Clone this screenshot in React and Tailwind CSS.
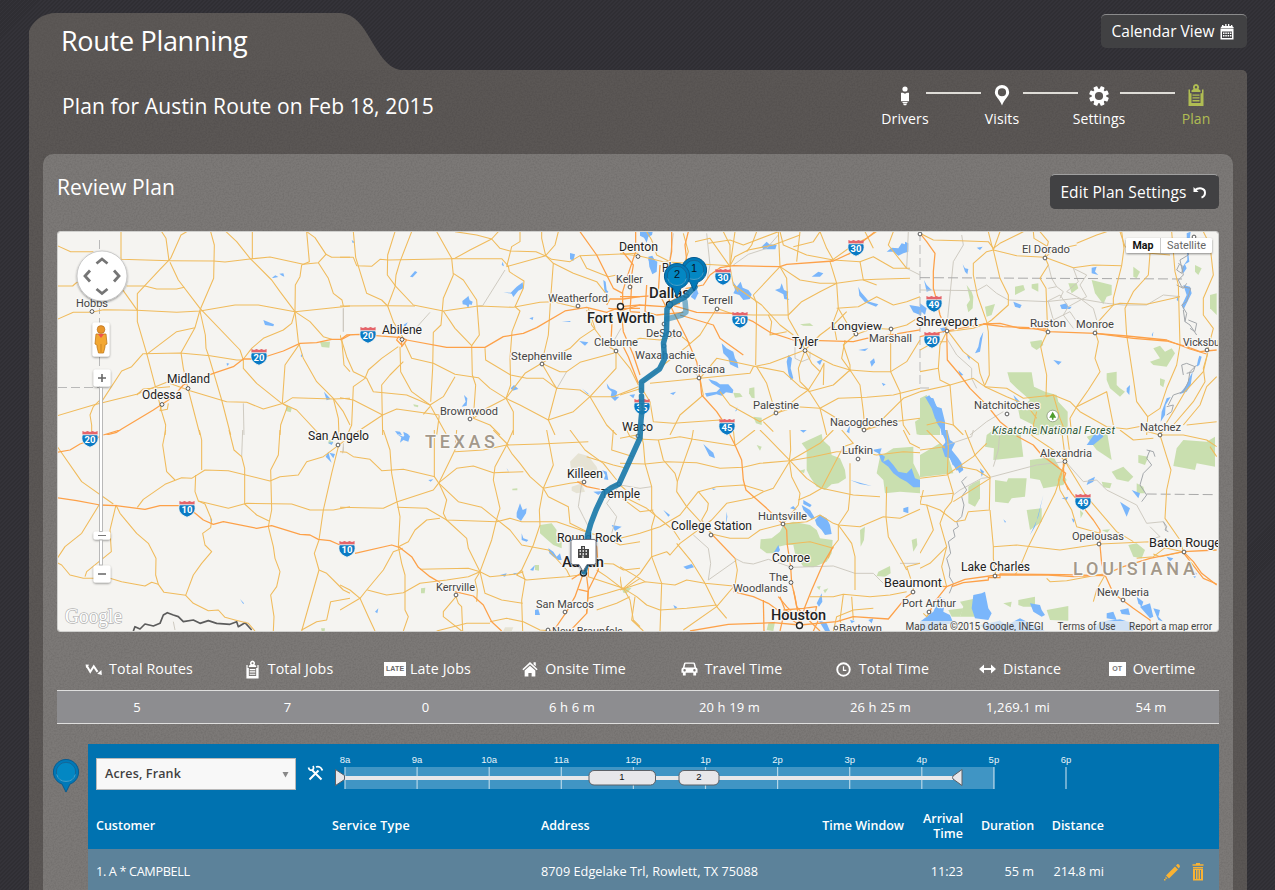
import React from "react";

/* ---------- map data: each tile is drawn at one third of its own units ---------- */
const tiles = [
  {
    x: 50, y: 225,
    roads: [
      "22,62 62,80 130,80", "22,183 68,183 78,174 100,165", "22,283 70,262 125,262 160,254 260,256 380,262 450,258 555,240 625,240 735,260 850,248 900,243",
      "213,20 213,103 360,107 490,108 525,111 600,102 660,96 760,118 805,113 828,88 845,97 900,97",
      "335,20 348,40 357,107", "410,20 393,30 362,100 330,133 262,206 262,290 290,385 320,500 335,560 347,600 345,630",
      "360,112 385,165 450,250 570,375 580,405 580,430 620,475 695,535 740,555 810,630",
      "482,20 493,60 491,160 450,255 435,308 393,383 400,430 415,495 450,630",
      "528,20 560,50 600,100 665,165 690,200 735,260 745,350 760,400 800,470 850,520 865,580 867,630",
      "607,20 607,102", "770,20 778,110 755,120 750,155 736,180 735,260 725,295 700,315 640,340 605,370 578,405",
      "770,20 795,38 828,88", "805,113 835,160 850,205 876,225 880,243", "230,183 285,183 320,192 380,192 403,187", "215,190 262,256",
      "450,258 466,330 468,370 475,390 490,440 515,525 542,630", "280,386 390,384 480,392 560,405 580,405", "290,388 380,320 435,308",
      "155,530 215,438 245,425 280,385", "22,572 130,540 260,508 350,472 400,490 420,497 530,530 590,532 640,552 700,535 728,518 850,522 900,520",
      "155,520 130,545 120,570 125,600 125,620", "735,260 780,290 820,335 845,343", "750,355 705,420 697,535 712,545 692,600 690,630",
      "875,343 882,420 900,440", "260,510 280,492 360,485", "335,540 330,557 352,553 355,535", "850,520 880,560 900,600",
    ],
    major: ["150,635 200,622 215,612 310,555 370,515 400,480 490,445 550,425 580,402 625,402 700,378 750,355 800,353 845,343 875,343 900,330"],
    minor: ["880,250 880,320", "580,535 582,630"],
    water: ["640,285 672,298 670,304 645,300", "822,500 842,522 830,526", "666,158 676,151 685,156 670,159", "688,146 700,145 703,155 696,152", "530,414 538,416 531,423", "752,393 758,385 755,397"],
    park: ["810,350 840,350 838,368 815,366", "710,540 725,550 722,562 708,558"],
  },
  {
    x: 340, y: 225,
    roads: [
      "0,97 40,97 50,122 95,124 120,103 145,105 335,101 485,101 505,123 508,140 520,148 552,168 550,190 525,245 540,258 516,320 510,400 512,480 498,520",
      "40,20 47,97 80,205 125,225 143,243 160,290 190,340", "165,20 143,90 142,150 168,185 220,240 310,258 415,243 520,247 600,232 640,230 720,250",
      "215,20 180,110 168,150 165,185 143,243", "0,243 143,242 225,243", "290,20 335,100 340,150 310,220 303,300 280,322 278,430 272,530",
      "345,20 410,30 455,42 480,70 510,78 588,80 615,92", "475,20 455,42 390,75 345,100 335,101", "540,20 540,50 515,65 500,125",
      "605,20 605,40 617,92 590,100 500,125", "655,20 645,60 617,92", "617,92 640,115 700,145 770,170 805,215", "617,92 635,103 690,110 720,92 895,85",
      "640,115 632,220 625,330 605,415", "310,258 345,310 395,362 397,450 407,480 400,580", "340,145 370,165 410,225 418,330 395,362",
      "0,330 20,395 40,440 80,460 100,500 200,510 270,540", "175,365 125,400 85,435 75,460 40,485 35,600 22,630", "180,365 182,440 215,500 270,540 320,630",
      "192,350 215,400 280,415 345,448 415,458 450,490 498,520 520,560 520,630", "270,540 310,515 345,455", "0,518 40,525 128,570 170,552 298,570 290,630",
      "190,410 150,450 125,480 128,630", "128,570 60,615 40,630", "250,568 270,545", "435,370 437,405 512,450 560,460 610,460 650,490 720,495 750,515",
      "498,520 555,445 605,415 660,440 680,440 720,412 820,385 828,378", "605,415 640,475 650,490 625,585 645,630", "498,520 540,540 625,585 700,560 750,515 820,515 895,485",
      "828,378 828,430 750,515 800,600 830,630", "828,378 870,430 895,480", "400,580 440,550 498,520", "400,580 450,600 480,630", "720,92 740,130 805,155 830,150",
      "745,250 765,310 720,340 690,370 630,400 605,415", "740,255 755,300 800,360 828,378",
    ],
    major: ["0,345 20,330 60,328 185,338 200,345 320,367 435,367 490,335 550,325 590,308 675,258 740,247 800,262 830,250 900,250", "887,20 887,80 860,160 848,200 848,240", "720,20 770,90 820,190 848,205", "817,270 812,370", "845,270 850,320 880,390 900,450", "800,240 810,222 850,222 900,215", "805,250 850,255 900,240", "185,340 185,365 200,345 175,335 170,345 185,360"],
    minor: ["495,135 428,242 415,243", "10,250 10,320", "270,262 220,318", "680,440 650,492", "843,310 820,350"],
    water: ["367,228 382,216 385,212 389,226 398,230 395,240 388,238 385,250 379,240 368,238", "490,202 512,203 530,185 548,172 550,190 535,197 520,216 515,206", "210,155 225,138 232,142 218,157", "690,84 705,88 700,108 690,102", "488,110 492,124 485,120", "568,280 580,276 578,285", "790,165 797,170 800,195 805,200 800,210 793,195", "800,475 810,490 825,495 832,500 828,515 838,515 825,528 812,515 815,500 803,490", "372,510 382,520 380,542 365,545 377,530", "512,490 522,480 535,492 518,497", "725,490 750,510 740,505", "718,348 745,352 735,362", "35,45 45,52 38,54", "190,300 203,292 196,306", "665,288 692,288 690,291", "165,618 180,620 186,630 172,628", "190,620 205,628 206,632 192,630"],
    park: ["220,538 235,541 234,547 222,544"],
  },
  {
    x: 620, y: 225,
    roads: [
      "0,86 55,92 130,110 330,122", "80,20 95,45 110,90 150,110", "345,20 330,125 340,180 355,200", "410,20 395,60 380,80", "475,20 480,125", "540,20 530,110",
      "330,122 345,95 385,75 460,60 540,30", "225,50 270,40 330,125", "265,55 330,45 370,60 475,20", "480,125 500,160 505,280 545,350 555,375",
      "480,125 540,165 600,175 650,175 720,165 770,163 870,160", "480,125 400,210 410,235 407,420", "290,250 340,268 400,270 505,270",
      "290,250 240,330 200,365 130,420 65,475", "340,180 425,240 480,300 520,330", "505,270 545,230 600,200 650,175", "630,110 650,175 655,250 690,310 705,330",
      "630,110 700,60 740,40 770,20", "640,105 720,110 760,95 820,130 870,130", "720,110 730,165 770,180", "600,20 620,70 640,105", "650,250 715,245 770,215 820,240 860,230 900,215",
      "705,330 670,360 690,420 690,440", "710,328 760,310 812,313 860,300 900,275", "812,313 812,440", "690,435 760,440 812,440 860,410 900,345",
      "555,375 600,330 640,300 680,260", "555,375 575,415 600,440 565,495 600,550 620,630", "555,375 535,430 540,470 565,495", "555,375 610,405 640,420 690,435 640,480 565,500",
      "555,375 450,415 400,425 390,445 240,460 90,475", "410,425 440,475 467,565", "410,425 490,440 540,485 565,495 530,520 480,560 467,565", "240,460 290,400 410,425",
      "467,565 420,590 330,540 300,500", "467,565 530,545 600,550 650,580 735,615", "600,550 655,520 740,517 820,510 900,490", "690,435 720,480 730,560 735,615",
      "812,440 840,500 850,600 870,630", "735,615 780,590 850,520 900,500", "735,615 820,590 900,580", "240,460 250,510 180,570 150,630", "65,490 90,530 100,590 160,595 300,585 330,630",
      "0,510 65,490", "190,25 205,80 195,110", "735,20 760,70", "820,20 805,60 860,130", "655,250 640,290 650,345", "445,270 455,290 450,330 500,320", "0,360 60,340 120,345 180,330 210,355",
      "690,435 665,400 675,345", "600,20 580,50 520,65", "430,590 460,620", "310,20 330,60 330,120", "600,440 612,415 610,480", "480,20 490,60 560,90 640,105",
    ],
    major: ["148,235 200,190 250,180 270,150 300,128 340,122 480,125 500,118 640,108 690,85 715,60 765,20", "148,238 230,262 340,265 400,290 450,322 520,345 600,347 700,350 740,340 780,335 900,315", "150,240 180,300 200,340 230,410 240,460 245,510 290,560 310,590", "155,20 155,80 145,130 148,230", "0,245 60,240 130,245 180,235", "0,215 60,215 130,210", "80,180 75,260 110,270 190,262", "205,20 195,60 205,150", "180,270 280,300 300,340 370,390", "0,345 25,395 55,475", "35,180 30,260 60,262", "0,70 40,120 30,180", "120,120 115,200 140,250"],
    minor: ["475,30 440,70 385,88 340,120", "260,25 270,120 262,160", "160,25 150,100", "525,360 525,400 545,410 570,400 570,380", "865,20 860,130 900,150", "205,425 240,460"],
    water: ["60,20 98,20 96,30 85,35 80,53 72,38 60,32", "85,95 97,92 104,105 112,110 110,140 97,148 88,125", "95,95 90,110 84,104", "425,65 440,50 448,58 470,60 466,73 430,73", "338,168 350,185 362,170 368,188 385,195 395,208 390,222 370,225 358,210 340,205 345,195", "465,195 480,190 485,175 492,195 505,200 500,215 508,225 493,222 490,208", "575,155 595,140 610,145 600,155", "784,72 800,80 815,68 835,70 845,55 855,58 855,50 865,55 865,80 850,85 835,92 820,80 800,80", "715,185 722,200 735,215 748,230 775,238 768,245 735,232 718,212", "305,355 320,370 340,380 345,400 352,410 355,430 345,425 330,418 325,400 310,385", "505,390 516,400 512,430 520,460 512,465 505,445 500,410", "265,462 290,470 300,478 325,478 340,495 338,505 318,502 305,512 290,508 260,515 255,505 290,500 300,490 275,475", "750,410 762,400 765,412 755,425", "868,240 900,245 900,270 880,262", "28,510 45,508 40,520", "150,505 168,500 160,510", "715,375 745,370 735,378", "345,560 352,545 350,556", "785,473 797,478 790,483", "212,215 230,190 235,205 225,225", "590,410 608,402 600,420", "680,620 690,600 688,625"],
    park: ["388,490 403,487 404,520 395,518 387,505", "340,503 360,505 368,515 345,518", "400,575 425,578 425,600 408,595", "540,298 570,295 580,303 550,302", "885,590 900,580 900,630 890,628"],
  },
  {
    x: 920, y: 225,
    roads: [
      "0,25 40,45 120,47 205,50 220,70 240,55 310,20", "205,20 215,60 220,75 200,80 160,115 160,150 172,210 200,290 205,320 208,450 195,480",
      "220,75 240,160 265,210 265,240 215,285 200,295", "240,20 220,75", "220,75 290,92 375,97 460,128 520,120 605,122", "360,20 385,50 375,97", "470,60 400,75 378,95",
      "340,20 342,40 400,75", "470,55 530,30 560,20", "375,97 385,120 360,160 378,190 383,320 362,365 380,450 378,515", "605,20 612,70 605,122 580,220 580,240 535,290 527,325",
      "527,325 535,350 525,400 540,440 505,495 470,545 450,580 455,630", "690,85 685,150 640,200 615,250 620,330 640,460 650,530 683,575 680,630", "545,250 600,235 680,238 780,215",
      "755,20 765,140 775,180 780,360 770,420 740,490 720,550 683,575", "600,20 615,65 690,85 750,90", "850,20 870,60 880,150 850,220 850,270 880,310 863,375",
      "863,385 850,430 855,470 820,530 760,600 720,625", "890,455 860,485 840,540 790,600", "80,320 60,360 55,430 60,465 90,480 160,460 195,485", "85,320 130,380 175,415 180,445 195,485 260,515 320,540 350,580",
      "90,480 95,540 100,600 130,630", "0,500 90,480", "195,485 260,490 310,520 400,510 450,530 480,560 560,605 620,612 683,600", "378,515 400,510 420,580 440,630", "350,560 340,600 350,630",
      "0,440 55,430", "720,625 760,560 795,500 850,440 863,385", "20,600 60,590 100,600", "470,545 560,500 580,600", "800,600 890,590", "200,295 160,310 80,320", "0,375 45,350 80,350",
    ],
    major: ["0,25 20,50 45,85 40,140 40,190 50,225 60,270 80,315 82,405 120,450 150,490 200,540 240,590 290,630", "0,335 80,318 190,297 250,305 330,308 385,320 527,325 640,340 740,348 800,365 840,380 890,375", "190,297 240,295 300,310 380,312", "527,325 620,333 740,345 810,372 860,387"],
    minor: ["0,195 170,197 200,180 230,205 265,225 380,230 470,220 560,235 610,240 680,240 730,210 780,215", "125,30 130,60 100,110 80,310", "385,120 395,160 410,185 385,190", "380,230 420,210 445,245 500,215 480,180 500,150 460,130", "460,130 475,170 440,200 480,220 520,250 530,285", "385,230 400,285 450,260 470,290 520,300", "410,185 430,200 420,220", "80,340 110,390 155,430 155,460 170,490", "250,560 200,590 150,630", "445,245 430,270 460,310"],
    border: ["0,158 790,162"],
    river: ["775,115 790,125 785,145 770,135 778,118", "770,180 790,190 800,175", "805,285 830,295 825,320 810,310", "790,255 795,290 810,300 830,330", "790,450 785,420 800,415 825,425 820,440 800,445", "740,545 760,540 755,560 740,570", "800,40 805,90 780,105 790,150 775,165 785,185 812,190 800,230 785,240 800,265 795,290", "830,420 810,440 805,470 790,500 760,510 745,540"],
    water: ["800,25 812,20 808,50 802,60 808,110 795,118 800,130 790,145 785,130 802,105", "790,180 810,185 815,205 800,235 790,255 786,240 800,210", "128,118 135,130 145,132 142,148 135,140", "12,165 20,180 35,195 20,200", "515,128 530,125 525,140 535,150 515,145", "280,230 305,240 300,250 285,245", "175,365 180,340 190,320 185,350 180,380 165,385", "400,405 425,410 415,420", "420,240 440,235 445,245 455,245 450,252 425,252", "15,515 40,520 50,545 65,550 75,590 75,630 65,630 60,600 45,580 35,550", "838,392 845,395 838,420 830,425 834,405", "818,440 812,480 800,500 778,508 800,480 806,462", "752,516 737,540 735,570 722,590 725,560 740,520", "0,235 20,250 15,270 5,260 0,290", "695,330 700,320 698,335", "770,225 776,230 774,210", "620,490 630,480 628,510 620,500", "280,510 300,530 290,535", "170,68 188,65 180,75", "115,435 130,450 120,452", "140,390 150,395 148,405", "60,310 80,306 70,325"],
    park: ["262,442 335,442 342,485 375,500 410,510 415,530 443,560 443,630 350,630 340,600 300,580 295,555 330,525 290,490 270,470", "515,165 575,180 575,210 560,215 550,238 525,205", "285,185 310,180 315,195 285,210", "195,245 225,237 215,270 200,275", "140,180 155,200 160,215 158,250 145,262 140,240 150,225", "330,350 365,345 370,360 350,375 335,365", "560,445 590,440 590,480 600,490 615,500 600,515 570,490 560,465", "700,370 720,362 735,380 755,370 765,385 740,425 700,420 690,410 720,400", "640,125 660,140 650,160 640,155", "825,120 845,130 835,150 825,140", "870,210 890,205 890,270 870,250", "0,520 20,510 45,560 60,600 60,630 0,630", "445,175 470,175 475,190 455,205", "720,460 735,465 730,487 720,480", "335,178 355,175 355,200 335,190"],
  },
  {
    x: 50, y: 430,
    roads: [
      "22,50 95,155 190,222", "147,225 95,310 45,350 22,385", "198,225 180,300 184,365 110,425 105,440", "22,398 35,405 60,435 100,445 180,445 215,455 285,468 305,457 325,463 342,487 407,496 430,520 475,542 505,540 525,562 555,570 595,580 615,603",
      "198,225 210,250 260,310 295,340 318,385 317,435 325,463", "262,232 280,208 345,163 395,143 425,145 465,120 535,122 660,153 690,140 745,135 770,95 820,80 860,50 900,20",
      "347,0 338,45 350,125 375,150", "448,0 455,30 455,120", "437,135 435,185 445,213 535,235 590,220 725,222 780,240 850,240 900,230",
      "445,213 465,222 485,270 482,293 458,310 465,345 485,365 455,400 430,435 407,496", "537,0 552,60 575,80 584,115 584,222 620,255 657,273", "690,0 685,75 662,120 665,240 655,290 670,350 675,385 690,425 680,470 662,495 672,560 670,603",
      "865,50 845,130 820,240 807,330 793,370 807,420 755,603", "807,420 830,430 880,480 900,490", "755,600 800,575 830,570 842,515 900,505",
    ],
    major: ["160,15 210,0", "22,67 60,60 90,42 150,20", "22,203 80,212 150,225 198,227 285,238 330,227 400,227 430,245 460,270 490,283 520,275 620,295 665,287 750,313 780,315 805,328 840,332 870,345"],
    minor: ["578,0 575,80", "880,50 878,70", "370,575 375,600"],
    river2: ["250,603 255,590 270,597 285,582 310,588 330,580 340,555 352,548 370,555 385,560 400,575 430,570 450,580 475,572 500,580 540,583 560,575 565,590 585,578 605,600"],
    water: ["827,80 835,65 840,85 845,98", "838,68 855,72 850,85", "570,507 584,522 578,520", "834,38 850,36 845,45", "480,255 486,280 482,275"],
    park: ["835,30 850,30 848,40 836,42", "813,595 825,595 824,603 815,603"],
  },
  {
    x: 340, y: 430,
    roads: [
      "0,65 20,67 40,80 90,88 125,122 190,118 285,140", "130,0 150,60 155,130 170,210 180,260 175,350", "283,0 283,140 297,160 355,215 425,232 470,268 510,300 545,345 625,360",
      "350,0 345,60 297,158 280,180 172,215 130,235 0,232", "172,232 260,235 320,270 380,325 385,355 420,425", "297,160 320,210 310,250 320,270 470,275 510,265 545,275 650,275 750,310 790,320",
      "297,158 350,115 400,108 460,128 550,125", "345,65 430,60 500,45 600,42 745,35", "520,0 500,45 515,70 540,100 570,140 610,175", "500,45 465,110 460,150 480,235 470,268 455,330 420,425",
      "460,0 505,45", "610,175 598,240 600,285 580,345 545,420 555,450 545,510 548,603", "610,175 690,160 725,155", "610,175 640,105 620,0", "610,175 625,200 685,230 690,280 750,310",
      "300,265 260,270 225,300 205,335 175,350", "188,355 160,365 130,420 80,480 60,505 30,480 0,465", "175,350 185,400 195,435 195,540 205,560 190,603", "240,418 385,415 420,425 405,450 412,480 410,515", "82,480 140,495 190,488 240,460 320,450 385,440 420,425",
      "60,505 85,560 105,603", "60,505 0,540", "420,425 450,440 530,432 550,425", "545,420 530,435 560,450 620,445 680,440 720,435", "348,500 310,545 310,560 365,603", "348,500 355,520 365,530 368,603", "420,425 435,490 485,510 548,520",
      "290,603 380,580 450,580", "450,575 500,565 550,575 600,600 640,603", "625,360 680,420 690,440", "690,0 735,60 790,100 830,150", "740,80 820,105 860,115", "820,0 815,60 880,80", "770,400 820,402 850,420 900,415",
      "745,440 850,475 870,510 880,570 900,590", "770,420 800,440 850,478 900,445", "770,540 830,520 870,500", "745,505 800,490 850,475", "840,165 880,200 900,210", "860,0 870,20 895,30", "800,325 840,345 900,335",
    ],
    major: ["45,370 155,345 180,353 215,380 235,412 270,440 345,485 400,498 430,525 455,575 485,603", "712,155 740,170 790,180 838,160", "730,430 705,500 680,545 640,603", "740,440 745,480 740,550 690,603", "735,310 770,350 775,420 745,480 740,550", "715,478 745,485", "695,448 730,425", "745,310 745,440"],
    minor: ["725,160 715,230 730,260 745,290", "838,165 800,220 830,260 815,310", "10,40 10,65"],
    water: ["530,248 540,220 548,240 560,235 558,250 543,273 530,262", "170,12 190,20 197,10 210,18 205,35 190,30 180,38 184,22", "545,310 550,325 565,330 560,335 545,330", "585,540 595,538 600,555 585,555", "625,355 640,365 650,380 660,370 665,390 655,390 640,380 628,370", "785,120 800,125 805,150 792,148 796,135", "815,285 845,290 825,303", "105,545 115,535 112,550", "760,185 790,183 775,195", "480,435 500,430 495,440", "520,430 535,428 522,434", "570,420 585,405 580,422", "265,150 280,148 272,155", "500,115 507,125 502,120", "645,160 655,170"],
    park: ["600,285 635,280 650,300 648,315 665,335 665,355 640,345 620,328 600,310", "585,405 597,405 597,422 585,420", "243,475 256,473 254,490 243,490", "517,176 532,175 532,181 517,181", "845,475 875,473 860,490 850,488"],
    sand: ["690,95 715,70 745,78 770,110 780,140 730,140 695,130", "695,170 725,160 735,185 710,190 695,182", "495,592 520,592 515,603 490,603"],
  },
  {
    x: 620, y: 430,
    roads: [
      "0,25 50,15 70,28 115,30 180,20 220,28 345,47", "60,0 70,40 75,100 95,170 95,240 105,255 95,290 95,380 125,460 120,603", "115,30 130,90 165,130 172,155 170,185 200,230 275,312",
      "220,0 215,30 190,100 172,155", "0,100 75,102 140,95 230,98 300,115 370,112 420,100 510,92", "340,0 345,47", "510,0 512,60 508,92 515,140 540,190 535,225 490,280", "405,0 345,47",
      "510,92 440,20 420,0", "510,92 580,80 650,65 715,65 770,75 850,65 900,68", "510,92 560,145 605,175 700,195 780,200", "665,0 700,40 670,50 605,175", "605,175 570,195 535,210", "690,100 690,190 685,240 655,285",
      "0,325 60,310 120,290 180,255 235,185 290,170 370,165 430,183", "235,185 265,220 262,240 245,270 275,312", "95,380 140,365 150,375 180,340 275,270 320,220 395,205 430,185 460,175 510,92",
      "275,312 330,325 385,325 420,300 490,282", "490,282 560,275 600,255 640,280 655,285 720,290 790,260 840,265 900,238", "655,285 655,330 635,355 625,385", "655,285 695,340 705,380 705,480", "800,170 798,260 805,320 850,400 860,420",
      "500,343 570,335 640,355", "0,480 75,455 165,465 200,450 255,460 340,468", "75,455 0,410", "170,340 215,395 255,460 290,530 320,565", "95,380 60,430 10,475", "345,385 352,420 345,465 290,530 190,600", "10,475 50,500 80,525 120,540 200,535 290,525",
      "45,500 35,570 70,603", "180,330 160,300 80,235 0,195", "100,240 60,245 0,200", "570,500 640,500 670,493 750,500 810,495 860,485", "670,493 660,570 670,603", "860,410 880,470 880,485", "700,570 695,500", "860,410 900,400", "850,0 870,40 900,55", "510,92 600,40 640,0", "640,603 650,560 700,540 760,535", "0,440 5,475"],
    major: ["330,15 345,45 365,90 370,150 378,180 440,235 488,282 500,300 502,345 512,410 515,460 525,500 540,585", "275,312 345,385", "640,350 610,400 575,480 555,530 540,585", "340,485 400,500 445,520 500,560 540,585", "210,603 325,583 460,578 540,585 650,575 700,560 805,567 860,500 880,487", "480,500 495,540 515,550 570,545 600,560 580,603", "430,510 432,603", "490,540 550,535 590,530 580,570", "475,500 500,530 530,560", "520,480 530,530 555,560 600,603", "480,603 490,560"],
    minor: ["220,315 265,355 272,400 265,450", "0,165 60,175 95,170", "345,385 370,398 400,402 445,388 515,412 640,408 705,430 760,430 790,460", "265,450 350,390", "840,400 900,400"],
    water: ["755,60 785,55 780,70 795,80 790,95 805,88 820,105 835,125 860,130 875,115 885,145 900,150 900,172 880,172 860,155 840,145 820,130 805,110 785,95 775,70", "585,270 600,255 620,265 630,285 635,312 615,315 605,300 590,285", "545,225 570,240 585,265 575,268 550,240", "520,228 530,240 510,235", "190,410 215,402 222,412 200,418", "250,42 270,60 280,68 285,85 268,78", "850,235 865,230 865,250 850,245", "590,520 605,490 607,515 597,530", "460,370 475,345 480,360 470,375", "160,525 172,532 165,537", "690,570 705,573 695,580", "745,570 760,565 755,580", "595,570 620,580 630,603 615,603", "550,210 575,225 570,232 550,222", "690,150 755,168 720,162", "320,245 317,290 322,260", "130,240 150,255 145,260", "540,0 560,0 550,8", "275,175 288,177 280,180"],
    park: ["545,40 605,12 608,30 630,50 635,75 660,85 675,120 678,145 655,160 635,163 615,180 590,170 570,140 560,120 560,60", "490,285 520,275 570,285 590,300 600,325 638,330 635,370 620,395 580,412 550,410 525,370 520,345 498,345 475,350 470,370 440,370 420,355 422,328 455,325 480,305", "780,80 820,55 880,50 880,100 900,140 900,190 840,185 795,190 790,150 770,130", "720,300 735,290 732,330 722,350", "775,425 810,408 812,430 795,440 770,438", "410,45 425,50 420,62", "445,580 465,575 460,603 440,600", "590,470 602,468 598,480", "610,480 625,475 615,490", "875,330 890,325 892,345 880,365", "538,122 555,118 552,130"],
  },
  {
    x: 920, y: 430,
    roads: [
      "80,0 85,50 82,130 100,190 95,215 75,240 60,280 80,350 65,410 80,470", "0,60 75,50", "135,0 165,75 210,140 208,240 145,245 135,270 105,275 60,240 20,225 0,222", "100,215 210,145 170,120 120,110", "0,145 80,135 160,80 200,40",
      "210,240 220,350 220,385 227,435", "220,350 290,345 420,360 540,342 690,335 720,350 790,365", "437,95 405,190 375,250 325,350 300,410 285,435", "437,95 445,110 500,200 590,305 640,335", "437,95 425,0", "440,0 448,60 437,95",
      "437,95 400,60 340,20 320,0", "430,110 415,150 420,180 455,240 470,290 540,310", "720,15 740,80 753,120 740,180 735,265 780,330 790,365", "720,15 790,15 860,30 890,50", "720,15 665,0", "0,370 40,300 20,225",
      "555,435 530,480 520,515", "380,445 390,455 440,452 550,432", "790,365 720,380 700,372", "740,350 700,380 650,385", "30,545 20,560 10,550", "20,0 75,55", "600,0 640,30 700,25", "10,180 0,222", "870,50 890,80", "0,415 30,400 80,350", "100,190 0,200"],
    major: ["290,18 340,45 365,75 437,130 430,150 455,190 480,220 500,245 520,270 540,300 540,345 545,400 555,435 580,490 640,535 690,570 695,603", "0,465 80,470 135,448 230,435 385,435 460,440 550,435 610,410 690,385 790,365 890,360", "95,470 130,458 205,450 205,443 240,443 240,432 430,434 550,437", "790,365 820,395 845,430 890,465", "430,100 432,150 445,180", "30,545 40,520 80,470", "790,368 850,445 890,462"],
    minor: ["437,95 350,105 210,142 185,145 120,180 100,195", "437,95 490,155 530,150 560,180 650,225 680,280 730,275 740,300", "240,0 235,60 220,110", "160,0 155,20 80,45", "690,290 720,320 700,325"],
    border: ["680,192 885,194"],
    river: ["140,140 125,155 140,180 125,200 132,225 125,260 110,275 115,290 100,300 105,320 85,335 92,370 80,385 90,420 88,440 100,460 88,490", "690,60 680,85 695,105 670,130 660,165 680,195 665,215", "680,60 700,65 705,80", "730,275 740,290 735,300 745,305"],
    water: ["62,0 82,0 90,30 105,40 95,60 115,85 125,100 130,120 118,130 110,110 98,105 90,85 75,80 65,50 78,35", "500,45 525,10 545,0 550,20 520,45", "505,150 525,140 520,155 500,165", "425,205 445,200 440,210", "455,265 465,270 460,278", "250,268 258,275 255,278", "160,495 185,490 195,485 205,535 215,550 205,570 165,565 155,535", "330,520 360,525 365,540 375,555 365,560 340,545", "40,545 60,500 75,510 70,545 90,555 100,580 60,585 30,603 0,603 0,575", "650,500 670,515 665,530 655,520", "660,530 690,520 700,560 690,565", "600,540 625,535 630,555 605,552", "560,550 580,545 590,570 560,565", "700,535 720,540 715,560 730,575 715,570", "370,195 345,290 330,315 355,260", "800,415 830,430 825,445", "180,585 240,572 260,585 300,565 375,603 200,603", "540,575 600,568 640,580 640,603 520,600", "600,215 630,235 620,260", "635,180 660,190 655,205", "740,380 760,385 750,395", "180,115 192,125 185,140"],
    park: ["220,0 300,0 310,80 270,85 220,90 222,55 195,50 200,15", "330,90 400,80 440,150 430,165 370,175 360,150 330,145", "225,150 260,155 265,145 320,145 315,200 275,205 265,220 225,215", "145,170 160,160 180,150 180,205 165,230 145,220", "320,240 365,235 365,275 330,300", "380,540 445,528 445,572 390,570", "85,540 130,535 120,560 95,560", "295,510 345,500 345,530 310,530 295,525", "120,515 170,505 165,560 120,560 130,530", "770,55 790,30 860,35 885,20 885,110 830,100 825,120 760,108", "575,125 610,110 640,140 625,155 590,148", "655,75 685,80 675,105 655,98", "500,20 560,0 575,90 530,60", "625,345 650,340 675,360 665,385 640,380", "650,160 670,170 675,190 650,190", "0,75 60,40 85,80 100,130 0,142", "545,155 575,160 570,175 550,172", "250,520 275,515 272,532", "480,240 490,250 482,265", "545,300 570,298 562,308"],
  },
];

const places = [
  [76, 307, "Hobbs", 32, 11], [167, 383, "Midland", 43, 12], [142, 399, "Odessa", 40, 12], [308, 440, "San Angelo", 61, 12],
  [382, 334, "Abilene", 40, 12], [440, 415, "Brownwood", 58, 11], [511, 360, "Stephenville", 61, 11], [548, 302, "Weatherford", 60, 11],
  [587, 322.5, "Fort Worth", 68, 14, 1], [619, 251, "Denton", 39, 12], [616, 283, "Keller", 27, 11], [594, 346, "Cleburne", 44, 11],
  [649, 298, "Dallas", 41, 14, 1], [662, 272, "Plano", 27, 12], [702, 304, "Terrell", 31, 11], [646, 337, "DeSoto", 36, 11], [635, 359, "Waxahachie", 60, 11], [675, 373, "Corsicana", 50, 11],
  [753, 409, "Palestine", 46, 11], [792, 346, "Tyler", 26, 12], [831, 329.5, "Longview", 51, 11.5], [869, 342, "Marshall", 43, 11],
  [830, 426, "Nacogdoches", 68, 11], [622, 431, "Waco", 31, 12], [916, 326, "Shreveport", 62, 12], [1022, 253, "El Dorado", 48, 11],
  [1030, 327, "Ruston", 36, 11], [1076, 328, "Monroe", 38, 11], [1183, 346, "Vicksburg", 46, 11], [974, 409, "Natchitoches", 66, 11],
  [1140, 431, "Natchez", 41, 11], [1040, 457, "Alexandria", 52, 11], [1072, 540, "Opelousas", 52, 11], [1149, 547, "Baton Rouge", 72, 12],
  [961, 571, "Lake Charles", 69, 12], [1097, 596, "New Iberia", 52, 11], [884, 587, "Beaumont", 58, 12], [902, 607, "Port Arthur", 54, 11],
  [842, 454, "Lufkin", 31, 11], [758, 520, "Huntsville", 49, 11], [671, 529.5, "College Station", 81, 12], [772, 562, "Conroe", 38, 12],
  [769, 581, "The", 19, 11], [733, 592, "Woodlands", 55, 11], [771, 619.5, "Houston", 55, 14, 1], [839, 632, "Baytown", 43, 11],
  [567, 477.5, "Killeen", 36, 12], [601, 498, "Temple", 39, 12], [557, 541.5, "Round Rock", 65, 12], [562, 566.5, "Austin", 42, 14, 1],
  [436, 591, "Kerrville", 39, 11], [536, 608, "San Marcos", 58, 11], [552, 635, "New Braunfels", 71, 11],
];

const towns = [
  [92, 311.5], [188, 388.5], [162, 404.5], [338, 445], [402, 339.5], [470, 419], [542, 364], [578, 306], [638, 256.5], [630, 287], [616, 351],
  [717, 309], [664, 324], [664, 346], [699, 378], [776, 413], [805, 350.5], [856, 334], [891, 329], [864, 430], [638, 436], [947, 331], [1045, 258],
  [1048, 332], [1095, 333], [1207, 350], [1007, 414], [1160, 435], [1065, 461.5], [1099, 544], [1184, 552], [995, 576], [1123, 600], [913, 592],
  [929, 612], [858, 459], [783, 524], [711, 535], [791, 567.5], [791, 582.5], [836, 628], [584, 482], [619, 484], [456, 595], [565, 612], [548, 630], [920, 234], [1194, 237],
];

const shields = [
  [259, 357, "20"], [368, 335, "20"], [90, 439, "20"], [187, 509, "10"], [347, 549, "10"], [723, 277, "30"], [740, 320, "20"], [856, 248, "30"],
  [642, 407, "35"], [727, 427, "45"], [934, 304, "49"], [932, 340, "20"], [1083, 502, "49"],
];

function Shield({ x, y, n }) {
  return (
    <g transform={`translate(${x} ${y})`}>
      <path d="M-7.6-4.2H7.6C9 1 7.6 5.4 0 8.2-7.6 5.4-9 1-7.6-4.2z" fill="#0a7ac4" stroke="#f5f4f1" strokeWidth=".8" />
      <path d="M-7.6-8l2.600 1 2.500-1L0-7l2.500-1L5-7l2.600-1v3.200H-7.600z" fill="#e5646a" />
      <text y="4.4" textAnchor="middle" fontSize="9.5" fontWeight="700" fill="#fff" fontFamily="Roboto, sans-serif">{n}</text>
    </g>
  );
}

function Pin({ x, y, n, tip = 21 }) {
  return (
    <g transform={`translate(${x} ${y})`}>
      <path d={`M0 ${tip}L-4 12A12.6 12.6 0 1 1 4 12z`} fill="#0079b8" stroke="#075c91" strokeWidth="1" />
      <circle r="9.700" fill="#0387c3" stroke="#1a5f8d" strokeWidth=".8" />
      <path d="M-9.300 2.500A9.700 9.700 0 0 0 9.300 2.500" fill="none" stroke="#4fb2dc" strokeWidth=".8" />
      {n && <text y="2" textAnchor="middle" fontSize="11" fill="#06121c" fontFamily="Liberation Sans, sans-serif">{n}</text>}
    </g>
  );
}

const Lines = ({ list, ...rest }) => (list ? <g fill="none" strokeLinejoin="round" {...rest}>{list.map((p, i) => <polyline key={i} points={p} />)}</g> : null);
const Shapes = ({ list, fill }) => (list ? <g fill={fill}>{list.map((p, i) => <polygon key={i} points={p} />)}</g> : null);

function Layer({ draw }) {
  return tiles.map((t, i) => (
    <g key={i} transform={`translate(${t.x} ${t.y}) scale(.33333)`} clipPath="url(#tile)">{draw(t)}</g>
  ));
}

function RouteMap() {
  return (
    <svg viewBox="58 232 1160 399" className="block h-[399px] w-[1160px]" fontFamily="Roboto, sans-serif">
      <defs>
        <clipPath id="tile"><rect width="930" height="630" /></clipPath>
        <filter id="lift" x="-30%" y="-30%" width="160%" height="160%"><feDropShadow dx="0" dy="1" stdDeviation="1" floodOpacity=".45" /></filter>
      </defs>
      <rect x="58" y="232" width="1160" height="399" fill="#f5f4f1" />
      <Layer draw={(t) => (<><Shapes list={t.sand} fill="#e6e3d4" /><Shapes list={t.park} fill="#c9dfaf" /><Shapes list={t.water} fill="#7ab6fb" /></>)} />
      <path d="M920 232V388M920 388H930M58 387.500H99M99.500 240V387" fill="none" stroke="#b9b9b9" strokeDasharray="9 4" />
      <path d="M928 396l8 12 2 14 8 12 2 18 10 18" fill="none" stroke="#7ab6fb" strokeWidth="3" />
      <Layer draw={(t) => (
        <>
          <Lines list={t.minor} stroke="#cbc7bd" strokeWidth="2.800" />
          <Lines list={t.border} stroke="#a9a9a9" strokeWidth="3" strokeDasharray="30 12" />
          <Lines list={t.river} stroke="#a3a7ab" strokeWidth="3" />
          <Lines list={t.river2} stroke="#5c5c5c" strokeWidth="5" />
          <Lines list={t.roads} stroke="#f0bb5c" strokeWidth="3.200" />
          <Lines list={t.major} stroke="#fda149" strokeWidth="3.800" />
        </>
      )} />
      <g fill="#fff" stroke="#555" strokeWidth="1">{towns.map(([x, y], i) => <circle key={i} cx={x} cy={y} r="1.900" />)}</g>
      <g fill="#fff" stroke="#222" strokeWidth="1.400"><circle cx="620.500" cy="306.500" r="3" /><circle cx="669.500" cy="304.500" r="3" /><circle cx="799.500" cy="625.500" r="3" /><circle cx="583.500" cy="573" r="3" /></g>
      <g fill="#333" stroke="#f9f8f6" strokeWidth="2.400" strokeLinejoin="round" paintOrder="stroke">
        {places.map(([x, y, s, w, size, bold]) => (
          <text key={s} x={x} y={y} fontSize={size} textLength={w} lengthAdjust="spacingAndGlyphs" fontWeight={bold ? 500 : 400} fill={bold || size > 11 ? "#222" : "#444"}>{s}</text>
        ))}
        <text x="992" y="434" fontSize="11" fontStyle="italic" textLength="123" fill="#2e5a35">Kisatchie National Forest</text>
        <text x="425" y="448" fontSize="18" fontWeight="500" textLength="70" fill="#a3988a">TEXAS</text>
        <text x="1073" y="575" fontSize="18" fontWeight="500" textLength="122" fill="#a3988a">LOUISIANA</text>
      </g>
      <circle cx="1052.700" cy="416" r="5.800" fill="#fff" stroke="#8c9b7d" strokeWidth=".8" />
      <path d="M1052.700 411.800l3.500 6h-2.700v2h-1.600v-2h-2.700z" fill="#4f9d2f" />
      {shields.map(([x, y, n], i) => <Shield key={i} x={x} y={y} n={n} />)}

      <g fill="none" stroke="#1b7aaa" strokeLinejoin="round" strokeLinecap="round" strokeWidth="5.500">
        <path d="M584 572l4-13-.500-24 3.500-12 5-13 8-17 7-5 8-4 11-24 10-22 1-18 1-10-.500-14" opacity=".92" />
        <path d="M641.500 391l0-9 18-13 5-10-1-16 3-11 .500-23 4-5 14-7 10-10" opacity=".92" />
        <path d="M667 319l15-4 4-3-1-11" opacity=".55" />
      </g>
      <Pin x={694} y={270} n="1" />
      <Pin x={677} y={276} n="2" />

      <g filter="url(#lift)">
        <path d="M573 539.500h21q2 0 2 2v21q0 2-2 2h-7l-4 7-4-7h-6q-2 0-2-2v-21q0-2 2-2z" fill="#fff" stroke="#6f7580" />
      </g>
      <path d="M578 549h3v-3h4v3h4v9h-11z" fill="#444" />
      <path d="M579.500 551h1.500m1.500 0h1.500m1.500 0h1.500M579.500 554h1.500m1.500 0h1.500m1.500 0h1.500M582.500 548h1.500M583 558v-2.500" stroke="#fff" strokeWidth="1.300" />

      <g filter="url(#lift)" fill="#fff">
        <circle cx="102" cy="276" r="25" stroke="#bbb" strokeWidth=".7" />
        <rect x="92.500" y="322.500" width="17" height="34" rx="2" />
        <rect x="93.500" y="369.500" width="17" height="17" rx="2" />
        <rect x="93.500" y="531.500" width="17" height="8" rx="2" />
        <rect x="93.500" y="565.500" width="17" height="17" rx="2" />
      </g>
      <g fill="none" stroke="#757575" strokeWidth="2.800">
        <path d="M96.500 263.500l5.500-4.500 5.500 4.500M96.500 289l5.500 4.500 5.500-4.500M90 270.500l-5 5.500 5 5.500M114 270.500l5 5.500-5 5.500" />
      </g>
      <rect x="99.500" y="387.500" width="3" height="144" fill="#fff" stroke="#aaa" strokeWidth=".8" />
      <rect x="99.500" y="540" width="3" height="25" fill="#fff" stroke="#aaa" strokeWidth=".8" />
      <path d="M98 378h8m-4-4v8M98 574h8" stroke="#666" strokeWidth="1.600" />
      <path d="M98 535.500h8" stroke="#777" />
      <circle cx="101" cy="329.500" r="3.900" fill="#e8962c" stroke="#b66a16" strokeWidth=".6" />
      <path d="M96 334h10l1 10-2 1v2l-1.500 6h-5l-1.500-6v-2l-2-1z" fill="#f3a833" stroke="#c07a1c" strokeWidth=".8" />
      <path d="M98 334h6l-3 4z" fill="#ef5350" /><path d="M101 344v8" stroke="#c07a1c" strokeWidth=".7" />

      <g filter="url(#lift)"><rect x="1126" y="238" width="86" height="15" rx="1.500" fill="#fff" /></g>
      <path d="M1160.500 238v15" stroke="#ccc" />
      <text x="1132.500" y="249.300" fontSize="11" fontWeight="700" textLength="21" lengthAdjust="spacingAndGlyphs" fill="#111">Map</text>
      <text x="1167" y="249.300" fontSize="11" textLength="39" lengthAdjust="spacingAndGlyphs" fill="#666">Satellite</text>

      <text x="65" y="623" fontSize="21" textLength="57" lengthAdjust="spacingAndGlyphs" fontFamily="Liberation Serif, serif" fill="#fff" stroke="#b4b4b4" strokeWidth="1.500" paintOrder="stroke">Google</text>
      <rect x="899" y="621" width="319" height="10" fill="#f5f4f1" opacity=".7" />
      <g fontSize="10" fill="#444">
        <text x="905.500" y="630" textLength="138" lengthAdjust="spacingAndGlyphs">Map data ©2015 Google, INEGI</text>
        <text x="1057.500" y="630" textLength="58" lengthAdjust="spacingAndGlyphs">Terms of Use</text>
        <text x="1129" y="630" textLength="83" lengthAdjust="spacingAndGlyphs">Report a map error</text>
      </g>
    </svg>
  );
}

/* ---------- icons ---------- */
const Clipboard = ({ className }) => (
  <svg viewBox="0 0 16 22" className={className} fill="currentColor">
    <path fillRule="evenodd" d="M8 0a3.200 3.200 0 0 1 2.500 5l2 1.500V8h-9V6.500L5.500 5A3.200 3.200 0 0 1 8 0zm0 2a1.200 1.200 0 1 0 0 2.400A1.200 1.200 0 0 0 8 2z" />
    <path fillRule="evenodd" d="M.5 5.500H2V9.300h12V5.500h1.500V22H.5zM3.500 9.300V19h9V9.300z" />
    <path d="M4.500 10.500h7v1.300h-7zm0 2.800h7v1.300h-7zm0 2.800h7v1.300h-7z" />
  </svg>
);
const Person = () => (
  <svg viewBox="0 0 12 20" className="h-5 w-3" fill="currentColor"><circle cx="6" cy="3" r="2.600" /><path d="M2 6.800h2l2 1 2-1h2v8.400H2zM3.500 16h5v1h-5zm.5 1.600h4l-.800 1.600H4.800z" /></svg>
);
const Marker = () => (
  <svg viewBox="0 0 16 22" className="h-[21px] w-4" fill="currentColor"><path fillRule="evenodd" d="M8 0a7.500 7.500 0 0 1 7.500 7.500C15.500 12 10.500 14.500 8 21.500 5.500 14.500.5 12 .5 7.500A7.500 7.500 0 0 1 8 0zm0 3.300a4.300 4.300 0 1 0 0 8.600 4.300 4.300 0 0 0 0-8.600z" /></svg>
);
const Gear = () => (
  <svg viewBox="-10 -10 20 20" className="h-5 w-5" fill="currentColor">
    {[22.5, 67.5, 112.5, 157.5].map((a) => <rect key={a} x="-2.100" y="-9.900" width="4.200" height="19.800" rx=".8" transform={`rotate(${a})`} />)}
    <circle r="7.300" /><circle r="4.100" fill="#5a5654" />
  </svg>
);
const Calendar = () => (
  <svg viewBox="0 0 14 16" className="h-4 w-[14px]"><path d="M.5 4l1.500-2v-1h1.500v1h1.700V0h1.300v2h1.500V0h1.300v2h1.700V1h1.300v1l1.700 2z" fill="#fff" /><path fillRule="evenodd" d="M.5 4.500h13V15.500H.5zM2 7.500V14h10V7.500z" fill="#fff" /><path d="M3 9.300h8.500M3 11.800h8.500" stroke="#fff" strokeWidth="1.500" strokeDasharray="1.500 .8" /></svg>
);
const Undo = () => (
  <svg viewBox="0 0 14 13" className="h-[13px] w-[14px]"><path d="M1.500 4.500C6 .8 12 2 12 6.800c0 2.400-1.200 4-3.500 4.800" fill="none" stroke="#fff" strokeWidth="2" /><path d="M.5 1v5h5z" fill="#fff" /></svg>
);
const icons = {
  routes: <svg viewBox="0 0 18 14" className="h-[13px] w-[17px]"><path d="M2 3.500l3.500 6 3.800-6 4 6" fill="none" stroke="#fff" strokeWidth="2.200" /><path d="M.5 1.500l4 .5-3.500 3.500zM13 11.500l4.500-4 .500 5.500z" fill="#fff" /></svg>,
  jobs: <Clipboard className="h-[19px] w-[13px]" />,
  late: <span className="flex h-[14px] w-[22px] items-center justify-center bg-white font-['Liberation_Sans',sans-serif] text-[7px] font-bold text-[#666]">LATE</span>,
  onsite: <svg viewBox="0 0 18 17" className="h-4 w-4"><path d="M1 9.300L9 1.800l8 7.500" fill="none" stroke="#fff" strokeWidth="1.800" /><path d="M13 1h2.500v4.500L13 3.500zM9 4.800l6 5.400V17h-4.200v-4H7.200v4H3v-6.800z" fill="#fff" /></svg>,
  travel: <svg viewBox="0 0 18 16" className="h-4 w-[17px]"><path fillRule="evenodd" d="M4.500 1h9q1 0 1.300 1L16 6.500q1.500.5 1.500 2V12H16v3h-3v-3H5v3H2v-3H.5V8.500q0-1.500 1.500-2L3.200 2q.3-1 1.300-1zm.2 1.500L3.700 6.500h10.600l-1-4zM3.800 8a1.300 1.300 0 1 0 0 2.600 1.300 1.300 0 0 0 0-2.600zm10.400 0a1.300 1.300 0 1 0 0 2.600 1.300 1.300 0 0 0 0-2.600z" fill="#fff" /></svg>,
  total: <svg viewBox="0 0 16 16" className="h-[15px] w-[15px]"><circle cx="8" cy="8" r="6.700" fill="none" stroke="#fff" strokeWidth="2" /><path d="M8 4.500V9h3" fill="none" stroke="#fff" strokeWidth="1.300" /></svg>,
  distance: <svg viewBox="0 0 17 12" className="h-3 w-[17px]"><path d="M4 6h9" stroke="#fff" strokeWidth="2" /><path d="M0 6l5-4.500v9zM17 6l-5-4.500v9z" fill="#fff" /></svg>,
  over: <span className="flex h-[14px] w-[17px] items-center justify-center bg-white font-['Liberation_Sans',sans-serif] text-[7px] font-bold text-[#777]">OT</span>,
};

const stats = [
  ["routes", "Total Routes", "5", "gap-[7px]"], ["jobs", "Total Jobs", "7", "gap-[9px]"], ["late", "Late Jobs", "0", "gap-[4px]"], ["onsite", "Onsite Time", "6 h 6 m", "gap-[7px]"],
  ["travel", "Travel Time", "20 h 19 m", "gap-[7px]"], ["total", "Total Time", "26 h 25 m", "gap-[8px]"], ["distance", "Distance", "1,269.1 mi", "gap-[7px]"], ["over", "Overtime", "54 m", "gap-[7px]"],
];

const Noise = () => (
  <svg className="pointer-events-none absolute inset-0 h-full w-full opacity-[.07]" aria-hidden="true">
    <filter id="grain"><feTurbulence type="fractalNoise" baseFrequency=".6" numOctaves="2" /><feColorMatrix values="0 0 0 0 0  0 0 0 0 0  0 0 0 0 0  2.200 0 0 0 -.8" /></filter>
    <rect width="100%" height="100%" filter="url(#grain)" />
  </svg>
);

function Step({ icon, label, active }) {
  return (
    <div className={"flex w-[42px] flex-col items-center " + (active ? "text-[#b0bd53]" : "text-white")}>
      <div className="flex h-[25px] items-end">{icon}</div>
      <div className="mt-[3px] whitespace-nowrap text-[14px] leading-5 tracking-[.1px]">{label}</div>
    </div>
  );
}
const Link = () => <div className="mt-[11px] h-[2px] w-[55px] bg-[#dfddd8]" />;

const hours = ["8a", "9a", "10a", "11a", "12p", "1p", "2p", "3p", "4p", "5p", "6p"];
function Timeline() {
  return (
    <svg viewBox="330 750 760 44" className="h-[44px] w-[760px]" fontFamily="Liberation Sans, sans-serif">
      <rect x="345" y="767" width="649.500" height="22" fill="#4095c4" />
      {hours.map((h, i) => (
        <g key={h}>
          <path d={`M${345 + i * 72.1} 767v22`} stroke="#b4d6e8" strokeWidth="1.200" />
          <text x={345 + i * 72.1} y="763" fontSize="9.500" textAnchor="middle" fill="#e6f2f9">{h}</text>
        </g>
      ))}
      <path d="M345 778H953" stroke="#e7e8ea" strokeWidth="4" />
      <g fill="#e7e7ea" stroke="#5c6066">
        <path d="M335.500 769.500v16l9-6v-4z" /><path d="M962 769.500v16l-9-6.500q-1-1.500 0-3z" />
        <rect x="589" y="770.500" width="66.500" height="14.500" rx="5" /><rect x="679" y="770.500" width="40" height="14.500" rx="5" />
      </g>
      <g fontSize="9.500" fill="#111" textAnchor="middle"><text x="622" y="780">1</text><text x="699" y="780">2</text></g>
    </svg>
  );
}

export default function App() {
  const grid = "grid grid-cols-[236px_209px_250px_113px_59px_71px_70px_1fr] items-center px-2";
  return (
    <div className="h-[890px] w-[1275px] overflow-hidden bg-[#313036] bg-[repeating-linear-gradient(135deg,#343339_0_1.400px,#2f2e33_1.400px_2.830px)] pl-[29px] pr-7 font-['Open_Sans',sans-serif] text-white">
      <header className="flex h-[70px] items-start justify-between">
        <div className="relative mt-[13px] h-[57px] w-[380px]">
          <svg viewBox="0 0 380 57" className="absolute inset-0 h-[57px] w-[380px]">
            <clipPath id="tab"><path d="M0 57V18C4 8 13 0 28 0H312C340 2 345 52 371 57z" /></clipPath>
            <g clipPath="url(#tab)">
              <rect width="380" height="57" fill="#5c5856" />
              <rect width="380" height="57" filter="url(#grain)" opacity=".05" />
            </g>
          </svg>
          <h1 className="relative pl-8 pt-[9px] text-[27px] leading-[38px] tracking-[-.3px]">Route Planning</h1>
        </div>
        <button className="mt-[14px] flex h-[34px] w-[146px] items-center justify-center gap-[6px] rounded-[5px] border-t border-[#8b8b8c] bg-[#414143] pr-[2px] text-[15.500px]">
          Calendar View <Calendar />
        </button>
      </header>

      <main className="relative h-[820px] rounded-tr-[5px] bg-[#5b5755] px-[14px]">
        <Noise />
        <section className="relative flex h-[84px] justify-between pl-[19px] pr-4">
          <h2 className="pt-[21px] text-[21px] leading-[30px] tracking-[.13px]">Plan for Austin Route on Feb 18, 2015</h2>
          <div className="flex pt-[11px]">
            <Step icon={<Person />} label="Drivers" /><Link />
            <Step icon={<Marker />} label="Visits" /><Link />
            <Step icon={<Gear />} label="Settings" /><Link />
            <Step icon={<Clipboard className="h-[22px] w-4" />} label="Plan" active />
          </div>
        </section>

        <section className="relative h-[760px] rounded-t-[10px] bg-[#7c7977] px-[14px]">
          <Noise />
          <div className="relative flex h-[77px] justify-between">
            <h3 className="pt-[18px] text-[21px] leading-[30px] tracking-[.13px]">Review Plan</h3>
            <button className="mt-5 flex h-[35px] w-[169px] items-center justify-center gap-[6px] rounded-[5px] border border-t-[#a0a0a0] border-[#414143] bg-[#414143] pr-[2px] pt-[2px] text-[15.500px] tracking-[.1px]">
              Edit Plan Settings <Undo />
            </button>
          </div>

          <div className="relative h-[401px] overflow-hidden rounded-[3px] border border-[#d0d0ce]"><RouteMap /></div>

          <div className="relative grid h-[58px] grid-cols-[160px_141px_135px_158px_157px_145px_130px_134px] pl-[2px] pt-[17px] text-[14.200px] tracking-[.12px]">
            {stats.map(([k, label, , gap]) => (
              <div key={k} className={"flex h-10 items-center justify-center whitespace-nowrap " + gap}>{icons[k]}<span>{label}</span></div>
            ))}
          </div>
          <div className="relative grid h-[34px] grid-cols-[160px_141px_135px_158px_157px_145px_130px_136px] items-center border-y border-[#dededd] bg-[#8d8d90] pt-px text-center text-[13px] tracking-[.13px]">
            {stats.map(([k, , v]) => <div key={k}>{v}</div>)}
          </div>

          <div className="relative mt-5 flex">
            <div className="-ml-[6px] w-[37px] pt-[13px]">
              <svg viewBox="-15 -15 30 38" className="h-[38px] w-[30px]"><Pin x={0} y={0} tip={20} /></svg>
            </div>
            <div className="w-[1131px]">
              <div className="h-[105px] bg-[#0072b0]">
                <div className="flex h-[54px] items-start pl-2">
                  <div className="mt-[14px] flex h-8 w-[200px] items-center justify-between border border-[#b9b9b9] bg-[#f8f8f8] pl-2 pr-[6px] pt-px text-[12.500px] font-semibold tracking-[.15px] text-[#3f3f3f]">
                    Acres, Frank
                    <svg viewBox="0 0 7 7" className="h-[7px] w-[7px]"><path d="M.5 1h6l-3 5.500z" fill="#888" /></svg>
                  </div>
                  <svg viewBox="0 0 16 16" className="ml-[11px] mt-[21px] h-4 w-[17px]" fill="none" stroke="#fff">
                    <path d="M4.500 5l9.500 9.500M11 5.500L2 14.500" strokeWidth="2" />
                    <path d="M1 2.500q1 3.500 3.500 2.500T5.500 1M8.500 2q3-1 5 1l1.500 2.500" strokeWidth="1.700" />
                  </svg>
                  <div className="ml-[6px] mt-[6px]"><Timeline /></div>
                </div>
                <div className={grid + " h-[54px] text-[12.500px] font-semibold leading-[15px]"}>
                  <div>Customer</div><div className="tracking-[.25px]">Service Type</div><div>Address</div><div className="text-right">Time Window</div>
                  <div className="pt-px text-right">Arrival<br />Time</div><div className="text-right tracking-[-.1px]">Duration</div><div className="text-right">Distance</div>
                </div>
              </div>
              <div className={grid + " h-[44px] bg-[#5c829a] pt-[2px] text-[12.700px]"}>
                <div className="tracking-[-.35px]">1. A * CAMPBELL</div><div /><div className="whitespace-nowrap tracking-[.04px]">8709 Edgelake Trl, Rowlett, TX 75088</div><div />
                <div className="text-right">11:23</div><div className="text-right">55 m</div><div className="text-right">214.8 mi</div>
                <div className="flex items-center justify-end gap-[11px] pr-[7px]">
                  <svg viewBox="0 0 18 18" className="h-[18px] w-[18px]" fill="#f9b233"><path d="M12 3.500l3 3L6 15.500l-3-3zM13 2.500l1.500-1.500q2-.5 2.500 2.500l-1.200 2zM2.500 13.500l2 2-2 .500zM1 16h1.500v1.500H1z" /></svg>
                  <svg viewBox="0 0 12 18" className="h-[18px] w-3" fill="#f9b233"><path d="M4 0h4v1.200h3.500v1.500H.5V1.200H4zM1 4h10v1H1z" /><path fillRule="evenodd" d="M1 5.500h10V17.500H1zM3 7v9h1V7zm2.500 0v9h1V7zM8 7v9h1V7z" /></svg>
                </div>
              </div>
            </div>
          </div>
        </section>
      </main>
    </div>
  );
}
